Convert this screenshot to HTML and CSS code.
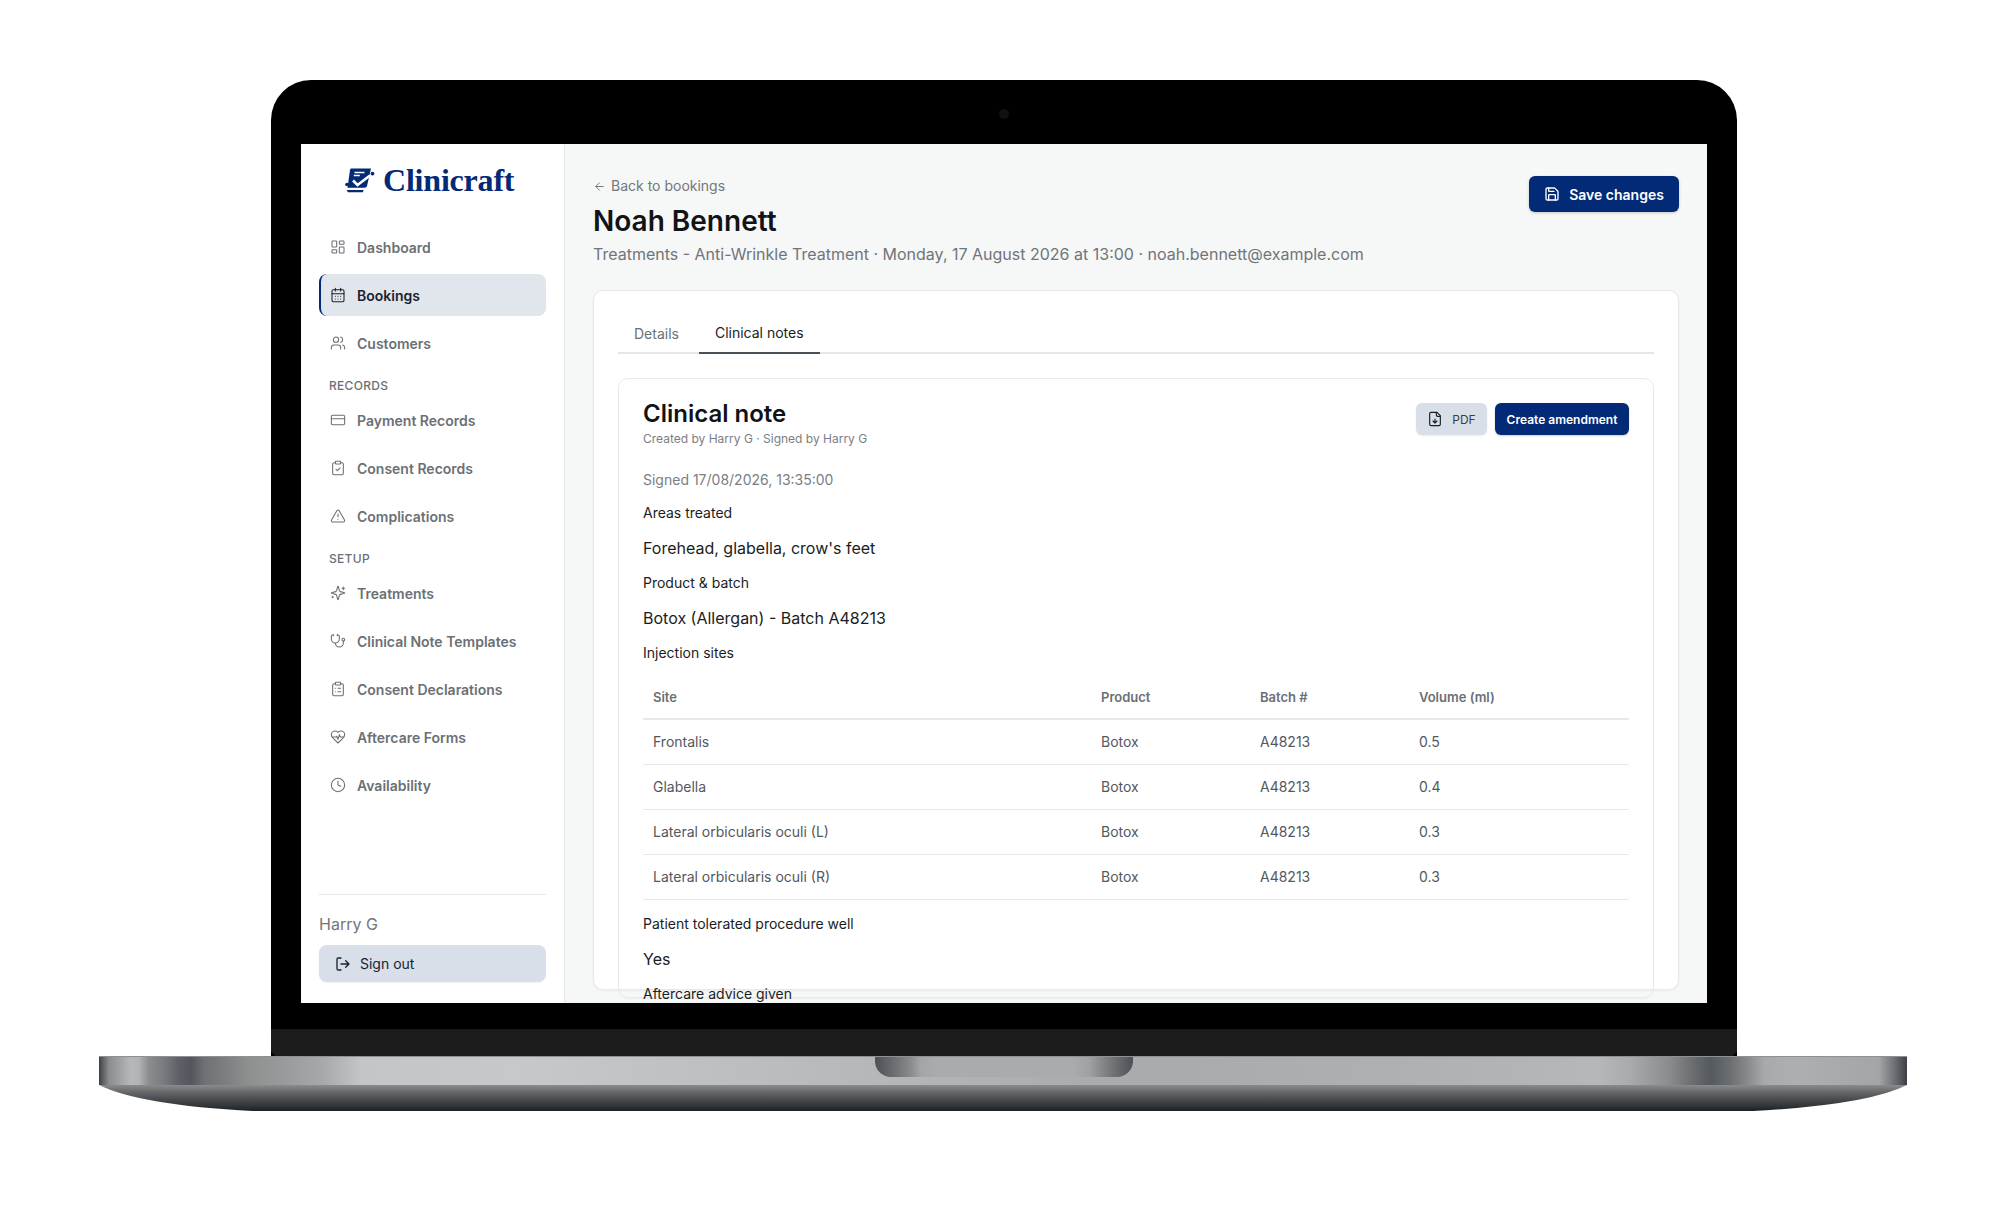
FILE: index.html
```html
<!DOCTYPE html>
<html lang="en">
<head>
<meta charset="utf-8">
<title>Clinicraft</title>
<link rel="stylesheet" href="styles.css">
</head>
<body>
<svg class="sprite" aria-hidden="true">
  <symbol id="i-dash" viewBox="0 0 24 24"><rect x="3" y="3" width="7" height="9" rx="1"/><rect x="14" y="3" width="7" height="5" rx="1"/><rect x="14" y="12" width="7" height="9" rx="1"/><rect x="3" y="16" width="7" height="5" rx="1"/></symbol>
  <symbol id="i-cal" viewBox="0 0 24 24"><path d="M8 2v4M16 2v4"/><rect x="3" y="4" width="18" height="18" rx="2"/><path d="M3 10h18M8 14h.01M12 14h.01M16 14h.01M8 18h.01M12 18h.01M16 18h.01"/></symbol>
  <symbol id="i-users" viewBox="0 0 24 24"><path d="M16 21v-2a4 4 0 0 0-4-4H6a4 4 0 0 0-4 4v2"/><circle cx="9" cy="7" r="4"/><path d="M22 21v-2a4 4 0 0 0-3-3.87M16 3.13a4 4 0 0 1 0 7.75"/></symbol>
  <symbol id="i-card" viewBox="0 0 24 24"><rect x="2" y="5" width="20" height="14" rx="2"/><path d="M2 10h20"/></symbol>
  <symbol id="i-clipcheck" viewBox="0 0 24 24"><rect x="8" y="2" width="8" height="4" rx="1"/><path d="M16 4h2a2 2 0 0 1 2 2v14a2 2 0 0 1-2 2H6a2 2 0 0 1-2-2V6a2 2 0 0 1 2-2h2"/><path d="m9 14 2 2 4-4"/></symbol>
  <symbol id="i-alert" viewBox="0 0 24 24"><path d="m21.73 18-8-14a2 2 0 0 0-3.48 0l-8 14A2 2 0 0 0 4 21h16a2 2 0 0 0 1.73-3"/><path d="M12 9v4M12 17h.01"/></symbol>
  <symbol id="i-spark" viewBox="0 0 24 24"><path d="M9.937 15.5A2 2 0 0 0 8.5 14.063l-6.135-1.582a.5.5 0 0 1 0-.962L8.5 9.936A2 2 0 0 0 9.937 8.5l1.582-6.135a.5.5 0 0 1 .963 0L14.063 8.5A2 2 0 0 0 15.5 9.937l6.135 1.581a.5.5 0 0 1 0 .964L15.5 14.063a2 2 0 0 0-1.437 1.437l-1.582 6.135a.5.5 0 0 1-.963 0z"/><path d="M20 3v4M22 5h-4M4 17v2M5 18H3"/></symbol>
  <symbol id="i-steth" viewBox="0 0 24 24"><path d="M11 2v2M5 2v2M5 3H4a2 2 0 0 0-2 2v4a6 6 0 0 0 12 0V5a2 2 0 0 0-2-2h-1M8 15a6 6 0 0 0 12 0v-3"/><circle cx="20" cy="10" r="2"/></symbol>
  <symbol id="i-cliplist" viewBox="0 0 24 24"><rect x="8" y="2" width="8" height="4" rx="1"/><path d="M16 4h2a2 2 0 0 1 2 2v14a2 2 0 0 1-2 2H6a2 2 0 0 1-2-2V6a2 2 0 0 1 2-2h2"/><path d="M12 11h4M12 16h4M8 11h.01M8 16h.01"/></symbol>
  <symbol id="i-heart" viewBox="0 0 24 24"><path d="M19 14c1.49-1.46 3-3.21 3-5.5A5.5 5.5 0 0 0 16.5 3c-1.76 0-3 .5-4.5 2-1.5-1.5-2.74-2-4.5-2A5.5 5.5 0 0 0 2 8.5c0 2.3 1.5 4.05 3 5.5l7 7Z"/><path d="M3.22 12H9.5l.5-1 2 4.5 2-7 1.5 3.5h5.27"/></symbol>
  <symbol id="i-clock" viewBox="0 0 24 24"><circle cx="12" cy="12" r="10"/><path d="M12 6v6l4 2"/></symbol>
  <symbol id="i-out" viewBox="0 0 24 24"><path d="M9 21H5a2 2 0 0 1-2-2V5a2 2 0 0 1 2-2h4"/><path d="m16 17 5-5-5-5M21 12H9"/></symbol>
  <symbol id="i-save" viewBox="0 0 24 24"><path d="M15.2 3a2 2 0 0 1 1.4.6l3.8 3.8a2 2 0 0 1 .6 1.4V19a2 2 0 0 1-2 2H5a2 2 0 0 1-2-2V5a2 2 0 0 1 2-2z"/><path d="M17 21v-7a1 1 0 0 0-1-1H8a1 1 0 0 0-1 1v7M7 3v4a1 1 0 0 0 1 1h7"/></symbol>
  <symbol id="i-file" viewBox="0 0 24 24"><path d="M15 2H6a2 2 0 0 0-2 2v16a2 2 0 0 0 2 2h12a2 2 0 0 0 2-2V7Z"/><path d="M14 2v4a2 2 0 0 0 2 2h4M12 18v-6M9 15l3 3 3-3"/></symbol>
  <symbol id="i-back" viewBox="0 0 24 24"><path d="m12 19-7-7 7-7M19 12H5"/></symbol>
</svg>

<div class="stage">
  <div class="lid">
    <div class="bezel-top"><span class="camera"></span></div>
    <div class="screen">
      <aside class="sidebar">
        <div class="logo">
          <svg class="logo-mark" viewBox="0 0 30 26">
            <path class="logo-fill" d="M6 1.5h20l-4 17.5q-.4 1.8-2.4 1.8H2.5L5 3q.2-1.5 1-1.5z"/>
            <path class="logo-fill" d="M1.5 23h17l-.5 2.2H3z"/>
            <path class="logo-line" d="M9.5 5.5h10M8.8 8.5h6"/>
            <path class="logo-check" d="M8 13.5l4.5 4.5L25 8.5"/>
            <circle class="logo-fill" cx="27.5" cy="6.6" r="1.9"/>
            <circle class="logo-fill" cx="2" cy="17.5" r="1.8"/>
          </svg>
          <span class="logo-text">Clinicraft</span>
        </div>
        <nav class="nav">
          <a class="nav-item"><svg class="ico"><use href="#i-dash"/></svg>Dashboard</a>
          <a class="nav-item active"><svg class="ico"><use href="#i-cal"/></svg>Bookings</a>
          <a class="nav-item"><svg class="ico"><use href="#i-users"/></svg>Customers</a>
          <div class="nav-label">RECORDS</div>
          <a class="nav-item"><svg class="ico"><use href="#i-card"/></svg>Payment Records</a>
          <a class="nav-item"><svg class="ico"><use href="#i-clipcheck"/></svg>Consent Records</a>
          <a class="nav-item"><svg class="ico"><use href="#i-alert"/></svg>Complications</a>
          <div class="nav-label">SETUP</div>
          <a class="nav-item"><svg class="ico"><use href="#i-spark"/></svg>Treatments</a>
          <a class="nav-item"><svg class="ico"><use href="#i-steth"/></svg>Clinical Note Templates</a>
          <a class="nav-item"><svg class="ico"><use href="#i-cliplist"/></svg>Consent Declarations</a>
          <a class="nav-item"><svg class="ico"><use href="#i-heart"/></svg>Aftercare Forms</a>
          <a class="nav-item"><svg class="ico"><use href="#i-clock"/></svg>Availability</a>
        </nav>
        <div class="side-foot">
          <div class="user">Harry G</div>
          <button class="signout"><svg class="ico"><use href="#i-out"/></svg>Sign out</button>
        </div>
      </aside>
      <main class="main">
        <header class="head">
          <div>
            <a class="back"><svg class="ico-back"><use href="#i-back"/></svg>Back to bookings</a>
            <h1 class="title">Noah Bennett</h1>
            <p class="subtitle">Treatments - Anti-Wrinkle Treatment · Monday, 17 August 2026 at 13:00 · noah.bennett@example.com</p>
          </div>
          <button class="btn-save"><svg class="ico"><use href="#i-save"/></svg>Save changes</button>
        </header>
        <section class="card">
          <div class="tabs">
            <span class="tab">Details</span>
            <span class="tab tab-on">Clinical notes</span>
          </div>
          <div class="note">
            <div class="note-head">
              <div>
                <h2 class="note-title">Clinical note</h2>
                <p class="note-by">Created by Harry G · Signed by Harry G</p>
              </div>
              <div class="note-actions">
                <button class="btn-pdf"><svg class="ico"><use href="#i-file"/></svg>PDF</button>
                <button class="btn-amend">Create amendment</button>
              </div>
            </div>
            <p class="signed">Signed 17/08/2026, 13:35:00</p>
            <p class="label">Areas treated</p>
            <p class="value">Forehead, glabella, crow's feet</p>
            <p class="label">Product &amp; batch</p>
            <p class="value">Botox (Allergan) - Batch A48213</p>
            <p class="label">Injection sites</p>
            <table class="sites">
              <thead>
                <tr><th class="c-site">Site</th><th class="c-prod">Product</th><th class="c-batch">Batch #</th><th>Volume (ml)</th></tr>
              </thead>
              <tbody>
                <tr><td>Frontalis</td><td>Botox</td><td>A48213</td><td>0.5</td></tr>
                <tr><td>Glabella</td><td>Botox</td><td>A48213</td><td>0.4</td></tr>
                <tr><td>Lateral orbicularis oculi (L)</td><td>Botox</td><td>A48213</td><td>0.3</td></tr>
                <tr><td>Lateral orbicularis oculi (R)</td><td>Botox</td><td>A48213</td><td>0.3</td></tr>
              </tbody>
            </table>
            <p class="label label-after">Patient tolerated procedure well</p>
            <p class="value">Yes</p>
            <p class="label">Aftercare advice given</p>
          </div>
        </section>
      </main>
    </div>
    <div class="bezel-bottom"></div>
    <div class="chin"></div>
  </div>
  <div class="base">
    <div class="deck"><div class="notch"></div></div>
    <div class="foot"></div>
  </div>
</div>
</body>
</html>
```

FILE: styles.css
```css
* { box-sizing: border-box; }
html, body { margin: 0; padding: 0; background: #fff; }
body { width: 1989px; height: 1206px; overflow: hidden; font-family: Inter, "Liberation Sans", sans-serif; }
.sprite { display: none; }
p, h1, h2 { margin: 0; }
button { font-family: inherit; border: 0; padding: 0; }

.ico, .ico-back {
  fill: none; stroke: currentColor; stroke-width: 2; stroke-linecap: round; stroke-linejoin: round; flex: none;
}
.ico { width: 16px; height: 16px; }

/* laptop frame */
.stage { display: flex; flex-direction: column; align-items: center; width: 1808px; margin: 80px 0 0 99px; }
.lid {
  width: 1466px; margin-left: 2px; display: flex; flex-direction: column; align-items: center;
  background: #000; border-radius: 40px 40px 0 0;
}
.bezel-top { height: 64px; width: 100%; display: flex; justify-content: center; padding-top: 29px; }
.camera { width: 10px; height: 10px; border-radius: 50%; background: #0d1212; }
.screen { width: 1406px; height: 859px; display: flex; overflow: hidden; background: #f6f7f7; }
.bezel-bottom { height: 26px; }
.chin {
  height: 27px; width: 100%; border-top: 1px solid #161616;
  background:
    linear-gradient(45deg, #000 3px, transparent 3.5px),
    linear-gradient(-45deg, #000 3px, transparent 3.5px),
    #1c1c1c;
}
.base { width: 1808px; }
.deck {
  height: 29px; display: flex; justify-content: center; align-items: flex-start; padding-left: 0;
  border-top: 1px solid #8e9192;
  background: linear-gradient(90deg,
    #3c3f44 0, #5d6064 4px, #8b8d8f 10px, #a6a8a9 24px, #b7b8b9 32px, #b2b3b4 40px, #8a8c8e 50px, #7c7f82 62px,
    #5d6067 80px, #53565d 92px, #6f7275 106px, #7b7e7f 125px, #8e9090 150px, #9a9d9d 190px, #a7aaaa 225px,
    #c3c6c7 262px, #c6c9ca 420px, #b9bcbe 700px, #a9acae 1000px, #a9acae 1100px, #aeb1b3 1300px, #b5b8ba 1500px,
    #a9acae 1530px, #8a8c8e 1570px, #636669 1600px, #555a60 1612px, #6a6d70 1630px, #8a8c8e 1650px, #a7a9aa 1665px,
    #adafb0 1695px, #a3a5a6 1780px, #6c6f72 1796px, #3c3f44 1808px);
}
.notch {
  width: 258px; height: 20px; margin-left: 2px; border-radius: 0 0 16px 16px;
  background: linear-gradient(90deg, #4d5054 0, #6d7073 20px, #8a8d8f 36px, #a3a6a8 46px, #a9acae 60px, #a9acae 198px, #9fa2a4 214px, #84878a 228px, #66696c 244px, #4d5054 258px);
}
.foot {
  height: 26px;
  background: linear-gradient(180deg, #8a8d8d 0, #7a7c7d 3px, #666869 7px, #55585e 11px, #46494c 15px, #36393c 20px, #25282a 24px, #1d1f21 26px);
  clip-path: path("M0 0 H1808 Q1768 20 1654 26 H154 Q40 20 0 0 Z");
}

/* sidebar */
.sidebar {
  width: 264px; flex: none; background: #fff; border-right: 1px solid #e4e7eb;
  padding: 0 18px; display: flex; flex-direction: column;
}
.logo { height: 65px; padding: 18px 0 0 26px; display: flex; align-items: flex-start; gap: 8px; color: #032a76; }
.logo-mark { width: 30px; height: 26px; flex: none; margin-top: 5px; }
.logo-fill { fill: #032a76; }
.logo-line { stroke: #fff; stroke-width: 1.4; fill: none; }
.logo-check { stroke: #fff; stroke-width: 2.6; fill: none; }
.logo-text { font-family: "Liberation Serif", serif; font-size: 32px; line-height: 36px; font-weight: 700; letter-spacing: -.2px; }
.nav { display: flex; flex-direction: column; gap: 6px; margin-top: 17px; flex: 1; }
.nav-item {
  height: 42px; display: flex; align-items: center; gap: 11px; padding-left: 11px;
  font-size: 14px; font-weight: 600; color: #6b7075; border-radius: 8px;
}
.nav-item .ico { stroke-width: 1.6; }
.nav-item.active { background: #e1e5ec; color: #1a2230; border-left: 2px solid #032a76; padding-left: 9px; }
.nav-label { font-size: 12px; font-weight: 500; color: #6b7075; letter-spacing: .3px; padding: 7px 0 0 10px; height: 22px; line-height: 17px; margin-bottom: 1px; }
.side-foot { border-top: 1px solid #e4e7eb; padding-top: 18px; margin-bottom: 21px; }
.user { font-size: 16px; line-height: 22px; color: #737578; }
.signout {
  margin-top: 10px; width: 100%; height: 37px; background: #d9dfe9; border-radius: 8px;
  display: flex; align-items: center; gap: 9px; padding-left: 16px; font-size: 14px; font-weight: 400; color: #1a2230;
  box-shadow: 0 1px 2px rgba(0,0,0,.06);
}

/* main */
.main { flex: 1; min-width: 0; padding: 32px 28px 0; }
.head { display: flex; justify-content: space-between; align-items: flex-start; }
.back { display: flex; align-items: center; gap: 5px; font-size: 14px; line-height: 20px; color: #73777c; }
.ico-back { width: 13px; height: 13px; stroke-width: 1.8; }
.title { font-size: 28px; line-height: 36px; font-weight: 600; color: #111416; margin-top: 7px; letter-spacing: 0; }
.subtitle { font-size: 16px; line-height: 24px; color: #70757a; margin-top: 3px; }
.btn-save {
  height: 36px; width: 150px; background: #032a76; color: #fff; border-radius: 6px; margin-top: 0;
  display: flex; align-items: center; justify-content: center; gap: 9px; font-size: 14px; font-weight: 600;
  box-shadow: 0 1px 3px rgba(0,0,0,.2);
}
.card {
  margin-top: 24px; background: #fff; border: 1px solid #e7e9ec; border-radius: 10px; padding: 24px 24px 0;
  box-shadow: 0 1px 3px rgba(0,0,0,.05); height: 700px;
}
.tabs { display: flex; border-bottom: 2px solid #e4e8ec; height: 39px; gap: 0; }
.tab { height: 39px; padding: 0 16px; font-size: 14px; line-height: 38px; color: #6b7075; }
.tab:first-child { margin-right: 4px; }
.tab-on { color: #1a1d21; border-bottom: 2px solid #4a5058; line-height: 36px; }
.note {
  margin-top: 24px; border: 1px solid #e7e9ec; border-radius: 10px; padding: 0 24px;
  box-shadow: 0 1px 2px rgba(0,0,0,.04); height: 620px;
}
.note-head { display: flex; justify-content: space-between; padding-top: 20px; }
.note-title { font-size: 24px; line-height: 30px; font-weight: 600; color: #101316; letter-spacing: 0; }
.note-by { font-size: 12px; line-height: 16px; color: #7a7e83; margin-top: 2px; }
.note-actions { display: flex; gap: 8px; padding-top: 4px; }
.btn-pdf {
  width: 71px; height: 32px; background: #d9dfe9; border-radius: 6px; color: #3a3f46; font-size: 12px;
  display: flex; align-items: center; justify-content: center; gap: 9px; box-shadow: 0 1px 2px rgba(0,0,0,.08);
}
.btn-pdf .ico { stroke-width: 1.7; color: #1a1d21; }
.btn-amend {
  width: 134px; height: 32px; background: #032a76; color: #fff; border-radius: 6px; font-size: 12px; font-weight: 600;
  box-shadow: 0 1px 2px rgba(0,0,0,.2);
}
.signed { font-size: 14px; line-height: 20px; color: #7a7e83; margin-top: 23px; }
.label { font-size: 14px; line-height: 20px; color: #1a1d21; margin-top: 13px; }
.value { font-size: 16px; line-height: 24px; color: #1a1d21; margin-top: 13px; }
.value + .label { margin-top: 13px; }
.sites { width: 986px; border-collapse: collapse; table-layout: fixed; margin-top: 12px; font-size: 14px; }
.sites th { font-size: 13px; font-weight: 600; color: #6b7075; text-align: left; height: 44px; padding: 0 10px; border-bottom: 2px solid #e6e9ec; }
.c-site { width: 448px; }
.c-prod, .c-batch { width: 159px; }
.sites td { height: 45px; padding: 0 10px; color: #53585e; border-bottom: 1px solid #e6e9ec; font-size: 14px; }
.label-after { margin-top: 14px; }
```
